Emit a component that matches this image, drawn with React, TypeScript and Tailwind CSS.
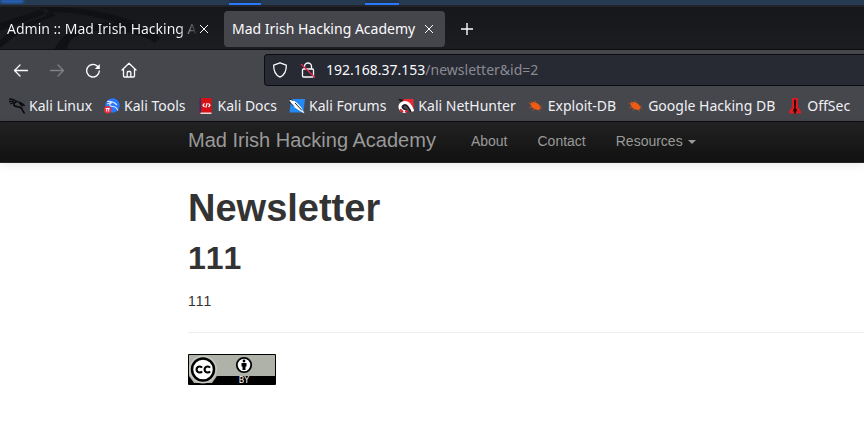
import React from "react";

function Dragon({ className }: { className?: string }) {
  return (
    <svg viewBox="0 0 16 16" className={className} fill="none" stroke="currentColor" aria-hidden="true">
      <path d="M0 1 L4 1.500 L8 3.500 M0 3.500 L5 3.500 M1 6 L6 4.500" strokeWidth="1.300" />
      <path d="M7 4 C3.500 5.500 4.500 8.500 8 8.700 C11 9 13 10 13.500 12 C14 13.500 15 14 15.500 15.500" strokeWidth="1.700" />
      <path d="M6 3.800 C10 3.300 12.500 4.500 15 7.200 L12.500 6.800 M10 4.500 L13.500 8.500" strokeWidth="1.300" />
    </svg>
  );
}

function ToolsIcon() {
  return (
    <svg viewBox="0 0 16 16" className="size-4 shrink-0" aria-hidden="true">
      <circle cx="8.500" cy="7.500" r="7.200" fill="#2777ff" />
      <path d="M3 3.500 C7 3 10 4 13 7 M8 4.500 C4 6.500 6 8.500 9 8.500 C12 8.500 13 10.500 14 12.500 M3 6 L7 4.500" fill="none" stroke="#d8e6ff" strokeWidth="1.100" />
      <circle cx="3.700" cy="11.700" r="3.700" fill="#ec2b3b" />
      <path d="M1.700 10.500 H5.700 M2.700 10.500 V13.500 M4.700 10.500 V13.500" stroke="#fff" strokeWidth="1" />
    </svg>
  );
}

function DocsIcon() {
  return (
    <svg viewBox="0 0 16 16" className="size-4 shrink-0" aria-hidden="true">
      <path d="M1.500 0 H13.500 V16 H1.500 Z" fill="#d80f14" />
      <path d="M1.500 0 H3 V15 H1.500 Z" fill="#173a76" />
      <path d="M2.500 14.500 H13.500 V16 H2.500 Z" fill="#e7d9da" />
      <path d="M6.500 5.300 L5 7.200 L6.500 9 M10.500 5.300 L12 7.200 L10.500 9 M9.200 5 L7.800 9.500" fill="none" stroke="#fff" strokeWidth="1.200" />
    </svg>
  );
}

function ForumsIcon() {
  return (
    <svg viewBox="0 0 16 16" className="size-4 shrink-0" aria-hidden="true">
      <path d="M2 1 H16 L14.500 14.500 H0.500 Z" fill="#2389f5" />
      <path d="M0 1 L4 2 L8 5 L12 9 L15.500 15.500 L9.500 12 L5 9 L2 5 Z" fill="#fff" />
      <path d="M0 1 L4.500 2.500 M0.500 4 L5 8.500 M6 5 L13 12.500" stroke="#17202b" strokeWidth="1" />
    </svg>
  );
}

function NetHunterIcon() {
  return (
    <svg viewBox="0 0 16 16" className="size-4 shrink-0" aria-hidden="true">
      <path d="M3 1 H15.500 V13 L9 7 Z" fill="#ec2a35" />
      <path d="M0 1 L6 1.500 L3 4 Z" fill="#141414" />
      <path d="M8 13.500 C1 13.500 0 6 5.500 4.700 C10 3.800 12 6.500 15 13.500" fill="none" stroke="#fff" strokeWidth="3" />
      <path d="M8.500 11.500 C4.500 12 3.500 7.500 6.500 7 C9 6.700 10.500 9 13 14" fill="none" stroke="#1c1118" strokeWidth="1.200" />
      <path d="M7 13.500 H10 M2 11.500 L5 14" stroke="#df1e32" strokeWidth="2.200" />
    </svg>
  );
}

function BugIcon() {
  return (
    <svg viewBox="0 0 16 16" className="size-4 shrink-0" aria-hidden="true">
      <ellipse cx="7.500" cy="8" rx="5.500" ry="3.200" transform="rotate(30 7.500 8)" fill="#ef5b12" />
      <path d="M5 6 L3 3 M8 5 L7 2.500 M11 8 L14 8 M12 9 L14.500 11 M4 9 L1 10 M7 11 L4 12.500 M10 12 L12 13.500 M3 5.500 L0.500 5" stroke="#a3542f" strokeWidth="0.800" />
    </svg>
  );
}

function OffSecIcon() {
  return (
    <svg viewBox="0 0 16 16" className="size-4 shrink-0" aria-hidden="true">
      <path d="M5 0 H11 V9 L14 13.500 V15.500 H2 V13.500 L5 9 Z" fill="#e01a22" />
      <path d="M8 1 L9.200 3 L8.700 9.500 L10.500 13.500 L9 13 V15.500 H7 V13 L5.500 13.500 L7.300 9.500 L6.800 3 Z" fill="#26090b" />
    </svg>
  );
}

const bookmarks = [
  { label: "Kali Linux", icon: <Dragon className="size-4 shrink-0 text-[#0c0d10]" /> },
  { label: "Kali Tools", icon: <ToolsIcon /> },
  { label: "Kali Docs", icon: <DocsIcon /> },
  { label: "Kali Forums", icon: <ForumsIcon /> },
  { label: "Kali NetHunter", icon: <NetHunterIcon /> },
  { label: "Exploit-DB", icon: <BugIcon /> },
  { label: "Google Hacking DB", icon: <BugIcon /> },
  { label: "OffSec", icon: <OffSecIcon /> },
];

function CloseIcon() {
  return (
    <svg viewBox="0 0 10 10" className="size-[10px]" fill="none" stroke="currentColor" strokeWidth="1" aria-hidden="true">
      <path d="M1 1 L9 9 M9 1 L1 9" />
    </svg>
  );
}

function TabStrip() {
  return (
    <div className="relative flex h-[43px] items-center overflow-hidden border-b border-[#0c0d10] bg-linear-to-b from-[#16171b] to-[#1c1d21] pt-[1px] text-[#fbfbfe]">
      <svg viewBox="0 0 240 43" className="absolute top-0 left-0 h-[43px] w-60" aria-hidden="true">
        <path d="M0 41 C25 20 40 14 55 9 L48 0 H40 L47 9 C30 13 12 22 0 33 Z M0 16 L46 1 L50 5 L0 24 Z" fill="#101114" />
        <path d="M48 0 C85 0 115 7 136 15 L126 14 C145 20 155 26 160 31 L155 36 C130 20 95 20 75 30 C67 35 69 39 66 43 H54 C65 20 90 14 118 16 C94 8 68 5 50 5 Z" fill="#101114" />
      </svg>
      <div className="relative flex h-9 w-[217px] items-center pl-[7px]">
        <span className="w-[191px] overflow-hidden bg-linear-to-r from-[#fbfbfe] from-90% to-transparent bg-clip-text whitespace-nowrap text-transparent">
          Admin :: Mad Irish Hacking Academy
        </span>
        <button aria-label="Close Admin tab" className="ml-[1px] shrink-0"><CloseIcon /></button>
      </div>
      <div className="relative ml-[7px] flex h-9 w-[221px] items-center justify-between rounded-[4px] bg-[#45464c] pr-[11px] pl-2">
        <span className="whitespace-nowrap">Mad Irish Hacking Academy</span>
        <button aria-label="Close Mad Irish Hacking Academy tab"><CloseIcon /></button>
      </div>
      <button aria-label="New tab" className="relative ml-[15px]">
        <svg viewBox="0 0 14 14" className="size-[14px]" stroke="currentColor" strokeWidth="1.400" aria-hidden="true">
          <path d="M7 1 V13 M1 7 H13" />
        </svg>
      </button>
    </div>
  );
}

function AddressBar() {
  return (
    <div className="flex h-10 items-center text-[#fbfbfe]">
      <div className="flex w-[264px] shrink-0 items-center gap-5 pl-[13px]">
        <button aria-label="Back">
          <svg viewBox="0 0 16 16" className="size-4" fill="none" stroke="currentColor" strokeWidth="1.300" strokeLinecap="round" strokeLinejoin="round" aria-hidden="true">
            <path d="M14.500 8.500 H1.500 M7 3 L1.500 8.500 L7 14" />
          </svg>
        </button>
        <button aria-label="Forward" disabled className="text-[#808187]">
          <svg viewBox="0 0 16 16" className="size-4" fill="none" stroke="currentColor" strokeWidth="1.300" strokeLinecap="round" strokeLinejoin="round" aria-hidden="true">
            <path d="M1.500 8.500 H14.500 M9 3 L14.500 8.500 L9 14" />
          </svg>
        </button>
        <button aria-label="Reload">
          <svg viewBox="0 0 16 16" className="size-4" fill="none" stroke="currentColor" strokeWidth="1.400" strokeLinecap="round" aria-hidden="true">
            <path d="M14.300 9 A6.300 6.300 0 1 1 12.500 4.300" />
            <path d="M14.800 2 V7 H9.800 Z" fill="currentColor" stroke="none" />
          </svg>
        </button>
        <button aria-label="Home">
          <svg viewBox="0 0 16 16" className="size-4" fill="none" stroke="currentColor" strokeWidth="1.300" strokeLinejoin="round" strokeLinecap="round" aria-hidden="true">
            <path d="M1 8 L8 1.200 L15 8 M2.500 6.700 V14 Q2.500 15 3.500 15 H12.500 Q13.500 15 13.500 14 V6.700 M6.200 15 V10.500 Q6.200 9.500 7 9.500 H9 Q9.800 9.500 9.800 10.500 V15" />
          </svg>
        </button>
      </div>
      <div className="flex h-8 grow items-center overflow-hidden rounded-l-[4px] border border-r-0 border-[#0c0d12] bg-[#272933] pl-[7px]">
        <svg viewBox="0 0 16 16" className="size-4 shrink-0" fill="none" stroke="currentColor" strokeWidth="1.300" strokeLinejoin="round" aria-hidden="true">
          <path d="M8 0.800 L14.300 3.200 C14.500 9 12.500 13 8 15.200 C3.500 13 1.500 9 1.700 3.200 Z" />
        </svg>
        <svg viewBox="0 0 16 16" className="ml-3 size-4 shrink-0" fill="none" stroke="currentColor" strokeWidth="1.300" aria-hidden="true">
          <path d="M4.500 7 V4.500 A3.500 3.500 0 0 1 11.500 4.500 V7 M3.500 7 H12.500 Q13.500 7 13.500 8 V14 Q13.500 15 12.500 15 H3.500 Q2.500 15 2.500 14 V8 Q2.500 7 3.500 7" />
          <path d="M1 2 L15 15.500" stroke="#e22850" strokeWidth="1.400" />
        </svg>
        <div
          role="textbox"
          aria-label="Address"
          contentEditable
          suppressContentEditableWarning
          className="ml-[10px] grow whitespace-nowrap text-[#8a8b92] outline-none"
        >
          <span className="text-[#fbfbfe]">192.168.37.153</span>/newsletter&amp;id=2
        </div>
      </div>
    </div>
  );
}

function BookmarkBar() {
  return (
    <nav aria-label="Bookmarks" className="flex h-8 items-center gap-3 overflow-hidden border-b border-[#0c0d10] pl-[9px] text-[#f0f0f4]">
      {bookmarks.map((b) => (
        <a key={b.label} href="#" className="flex shrink-0 items-center gap-1 whitespace-nowrap">
          {b.icon}
          {b.label}
        </a>
      ))}
    </nav>
  );
}

function LicenseBadge() {
  return (
    <svg viewBox="0 0 88 31" className="h-[31px] w-[88px]" role="img" aria-label="Creative Commons Attribution">
      <rect width="88" height="31" rx="1" fill="#000" />
      <path d="M1 1 H87 V22 H29 L24 29 H6 L1 22 Z" fill="#aeb2a9" />
      <path d="M1 22 H87 V30 H26 L29 22 Z" fill="#000" />
      <circle cx="15" cy="15.500" r="14" fill="#c4c7c0" />
      <circle cx="15" cy="15.500" r="11" fill="#fff" stroke="#000" strokeWidth="2.500" />
      <path d="M14 13.700 A3 3 0 1 0 14 17.300 M22 13.700 A3 3 0 1 0 22 17.300" fill="none" stroke="#000" strokeWidth="2.200" />
      <circle cx="56" cy="11" r="7.200" fill="#fff" stroke="#000" strokeWidth="1.800" />
      <circle cx="56" cy="7" r="1.400" />
      <path d="M53.500 9 H58.500 V12.500 H57.500 V16 H54.500 V12.500 H53.500 Z" />
      <text x="56" y="29" textAnchor="middle" fill="#fff" fontSize="8" fontFamily="DejaVu Sans, sans-serif">BY</text>
    </svg>
  );
}

export default function App() {
  return (
    <div className="min-h-screen overflow-hidden bg-white">
      <div className="bg-[#45474d] font-['Noto_Sans',sans-serif] text-[14px] leading-5">
        <div className="flex h-[7px] overflow-hidden border-b-2 border-[#222428] bg-[#263b52]">
          <span className="h-[3px] w-6 rounded-b-full bg-[#2866c8] blur-[1px]" />
          <span className="ml-[205px] h-[5px] w-8 border-b-2 border-[#2777ff] bg-[#20334a]" />
          <span className="ml-[104px] h-[5px] w-[34px] border-b-2 border-[#2777ff] bg-[#20334a]" />
        </div>
        <TabStrip />
        <AddressBar />
        <BookmarkBar />
      </div>
      <div className="font-['Liberation_Sans',Arial,sans-serif] text-[14px] leading-5 text-[#333333]">
        <nav className="flex h-[41px] items-start border-b border-[#252525] bg-linear-to-b from-[#222222] to-[#111111] pl-[188px] whitespace-nowrap text-[#999999] shadow-[0_1px_10px_rgba(0,0,0,0.1)]">
          <a href="#" className="pt-2 pr-5 text-[20px]">Mad Irish Hacking Academy</a>
          <a href="#" className="px-[15px] pt-[9px]">About</a>
          <a href="#" className="px-[15px] pt-[9px]">Contact</a>
          <button className="flex items-center px-[15px] pt-[9px]">
            Resources
            <span className="mt-[2px] ml-[5px] border-x-4 border-t-4 border-x-transparent border-t-[#999999]" />
          </button>
        </nav>
        <main className="pt-[25px] pl-[188px] [font-kerning:none]">
          <h1 className="text-[38px] leading-10 font-bold">Newsletter</h1>
          <h2 className="mt-[10px] text-[32px] leading-10 font-bold">111</h2>
          <p className="mt-[13px]">111</p>
          <hr className="my-[21px] border-[#eeeeee]" />
          <a href="#" className="inline-block"><LicenseBadge /></a>
        </main>
      </div>
    </div>
  );
}
